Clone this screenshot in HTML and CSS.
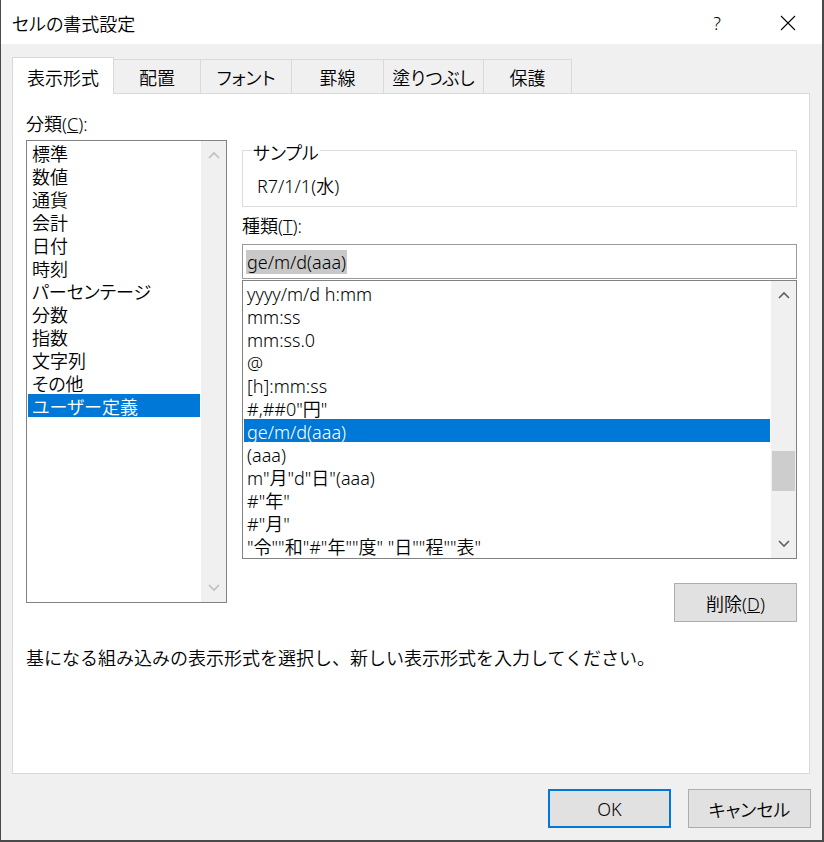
FILE: index.html
```html
<!DOCTYPE html>
<html lang="ja">
<head>
    <meta charset="UTF-8">
    <meta name="viewport" content="width=device-width, initial-scale=1.0">
    <title>セルの書式設定</title>
    <link rel="stylesheet" href="styles.css">
</head>
<body>
    <div class="window">
        <div class="titlebar">
            <span class="title">セルの書式設定</span>
            <span class="help">?</span>
            <span class="close">
                <svg width="16" height="16" viewBox="0 0 16 16"><path d="M1 1L15 15M15 1L1 15" stroke="#000" stroke-width="1.1" fill="none"/></svg>
            </span>
        </div>

        <div class="dialog">
            <div class="tabs">
                <div class="tab active">表示形式</div>
                <div class="tab w-align">配置</div>
                <div class="tab w-font">フォント</div>
                <div class="tab w-border">罫線</div>
                <div class="tab w-fill">塗りつぶし</div>
                <div class="tab w-protect">保護</div>
            </div>

            <div class="panel">
                <div class="columns">
                    <div class="left">
                        <div class="label">分類(<u>C</u>):</div>
                        <div class="listbox category">
                            <ul>
                                <li>標準</li>
                                <li>数値</li>
                                <li>通貨</li>
                                <li>会計</li>
                                <li>日付</li>
                                <li>時刻</li>
                                <li>パーセンテージ</li>
                                <li>分数</li>
                                <li>指数</li>
                                <li>文字列</li>
                                <li>その他</li>
                                <li class="selected">ユーザー定義</li>
                            </ul>
                            <div class="scrollbar disabled">
                                <div class="arrow"><svg width="12" height="8" viewBox="0 0 12 8"><polyline points="1,7 6,2 11,7" fill="none" stroke="currentColor" stroke-width="1.6"/></svg></div>
                                <div class="track"></div>
                                <div class="arrow"><svg width="12" height="8" viewBox="0 0 12 8"><polyline points="1,1 6,6 11,1" fill="none" stroke="currentColor" stroke-width="1.6"/></svg></div>
                            </div>
                        </div>
                    </div>

                    <div class="right">
                        <fieldset class="sample">
                            <legend>サンプル</legend>
                            <div class="sample-value">R7/1/1(水)</div>
                        </fieldset>

                        <div class="label type-label">種類(<u>T</u>):</div>
                        <div class="textbox"><span class="selected-text">ge/m/d(aaa)</span></div>

                        <div class="listbox formats">
                            <ul>
                                <li>yyyy/m/d h:mm</li>
                                <li>mm:ss</li>
                                <li>mm:ss.0</li>
                                <li>@</li>
                                <li>[h]:mm:ss</li>
                                <li>#,##0"円"</li>
                                <li class="selected">ge/m/d(aaa)</li>
                                <li>(aaa)</li>
                                <li>m"月"d"日"(aaa)</li>
                                <li>#"年"</li>
                                <li>#"月"</li>
                                <li>"令""和"#"年""度" "日""程""表"</li>
                            </ul>
                            <div class="scrollbar">
                                <div class="arrow"><svg width="12" height="8" viewBox="0 0 12 8"><polyline points="1,7 6,2 11,7" fill="none" stroke="currentColor" stroke-width="1.6"/></svg></div>
                                <div class="track"><div class="thumb"></div></div>
                                <div class="arrow"><svg width="12" height="8" viewBox="0 0 12 8"><polyline points="1,1 6,6 11,1" fill="none" stroke="currentColor" stroke-width="1.6"/></svg></div>
                            </div>
                        </div>

                        <div class="actions">
                            <button class="btn">削除(<u>D</u>)</button>
                        </div>
                    </div>
                </div>

                <p class="hint">基になる組み込みの表示形式を選択し、新しい表示形式を入力してください。</p>
            </div>

            <div class="footer">
                <button class="btn default">OK</button>
                <button class="btn">キャンセル</button>
            </div>
        </div>
    </div>
</body>
</html>
```

FILE: styles.css
```css
* {
    box-sizing: border-box;
}

body {
    margin: 0;
    background-color: #454545;
    font-family: "Noto Sans", "Noto Sans CJK JP", sans-serif;
    font-size: 18px;
    font-weight: 350;
    font-feature-settings: "palt";
    color: #000;
}

.window {
    width: 824px;
    height: 842px;
    display: flex;
    flex-direction: column;
    background-color: #f0f0f0;
    border-left: 1px solid #4a4a4a;
    border-right: 2px solid #4a4a4a;
    border-bottom: 2px solid #4a4a4a;
}

/* title bar */
.titlebar {
    height: 44px;
    flex: none;
    display: flex;
    align-items: center;
    background-color: #fff;
    padding-left: 11px;
    padding-right: 19px;
    padding-top: 1px;
}

.title {
    flex: 1;
}

.help {
    width: 30px;
    text-align: center;
    margin-right: 41px;
}

.close {
    width: 30px;
    display: flex;
    justify-content: center;
}

/* dialog body */
.dialog {
    flex: 1;
    display: flex;
    flex-direction: column;
    padding: 13px 11px 12px 11px;
}

.tabs {
    height: 36px;
    flex: none;
    display: flex;
    align-items: flex-end;
}

.tab {
    height: 34px;
    display: flex;
    align-items: center;
    justify-content: center;
    padding-top: 1px;
    background-color: #f0f0f0;
    border: 1px solid #d9d9d9;
    border-left: none;
    border-bottom: none;
}

.tab.active {
    width: 102px;
    height: 37px;
    margin-bottom: -1px;
    padding-top: 2px;
    background-color: #fff;
    border-left: 1px solid #d9d9d9;
    position: relative;
    z-index: 1;
}

.w-align { width: 87px; }
.w-font { width: 91px; }
.w-border { width: 92px; }
.w-fill { width: 100px; }
.w-protect { width: 88px; }

.panel {
    height: 681px;
    flex: none;
    margin-right: 1px;
    background-color: #fff;
    border: 1px solid #d9d9d9;
    padding: 18px 12px 0 13px;
}

.columns {
    display: flex;
    gap: 15px;
}

.left {
    width: 201px;
}

.right {
    width: 555px;
}

.label {
    line-height: 23px;
    padding-top: 1px;
}

/* list boxes */
.listbox {
    display: flex;
    background-color: #fff;
    border: 1px solid #828282;
    overflow: hidden;
}

.listbox ul {
    flex: 1;
    list-style: none;
    margin: 0;
    padding: 0 1px;
    overflow: hidden;
}

.listbox li {
    height: 23px;
    line-height: 19px;
    padding: 4px 0 0 4px;
    white-space: nowrap;
}

.listbox li.selected {
    background-color: #0078d7;
    color: #fff;
}

.category {
    height: 463px;
    margin-top: 4px;
}

.formats {
    height: 279px;
    margin-top: 1px;
}

.formats li {
    padding-left: 3px;
}

.scrollbar {
    width: 25px;
    flex: none;
    display: flex;
    flex-direction: column;
    background-color: #f0f0f0;
    color: #606060;
}

.scrollbar.disabled {
    color: #bfbfbf;
}

.arrow {
    height: 28px;
    display: flex;
    align-items: center;
    justify-content: center;
}

.track {
    flex: 1;
}

.thumb {
    height: 40px;
    margin: 142px 1px 0 1px;
    background-color: #cdcdcd;
}

/* sample group */
.sample {
    margin: 27px 0 0 0;
    padding: 0 0 0 9px;
    border: 1px solid #dcdcdc;
}

.sample legend {
    padding: 5px 1px 0 1px;
    line-height: 18px;
}

.sample-value {
    line-height: 23px;
    padding: 13px 0 8px 5px;
}

.type-label {
    margin-top: 7px;
}

.textbox {
    height: 35px;
    margin-top: 6px;
    display: flex;
    align-items: center;
    padding-left: 3px;
    padding-top: 1px;
    border: 1px solid #9a9a9a;
    background-color: #fff;
}

.selected-text {
    line-height: 24px;
    padding: 0 1px;
    background-color: #c8c8c8;
}

/* buttons */
.actions {
    display: flex;
    justify-content: flex-end;
    margin-top: 24px;
}

.btn {
    width: 123px;
    height: 39px;
    font-family: inherit;
    font-size: 18px;
    font-weight: inherit;
    font-feature-settings: inherit;
    color: #000;
    background-color: #e1e1e1;
    border: 1px solid #adadad;
    padding: 1px 0 0 0;
}

.btn.default {
    border: 2px solid #0078d7;
}

.hint {
    margin: 24px 0 0 0;
    line-height: 23px;
    padding-top: 1px;
    font-feature-settings: normal;
}

.footer {
    display: flex;
    justify-content: flex-end;
    gap: 17px;
    margin-top: 15px;
}
```
